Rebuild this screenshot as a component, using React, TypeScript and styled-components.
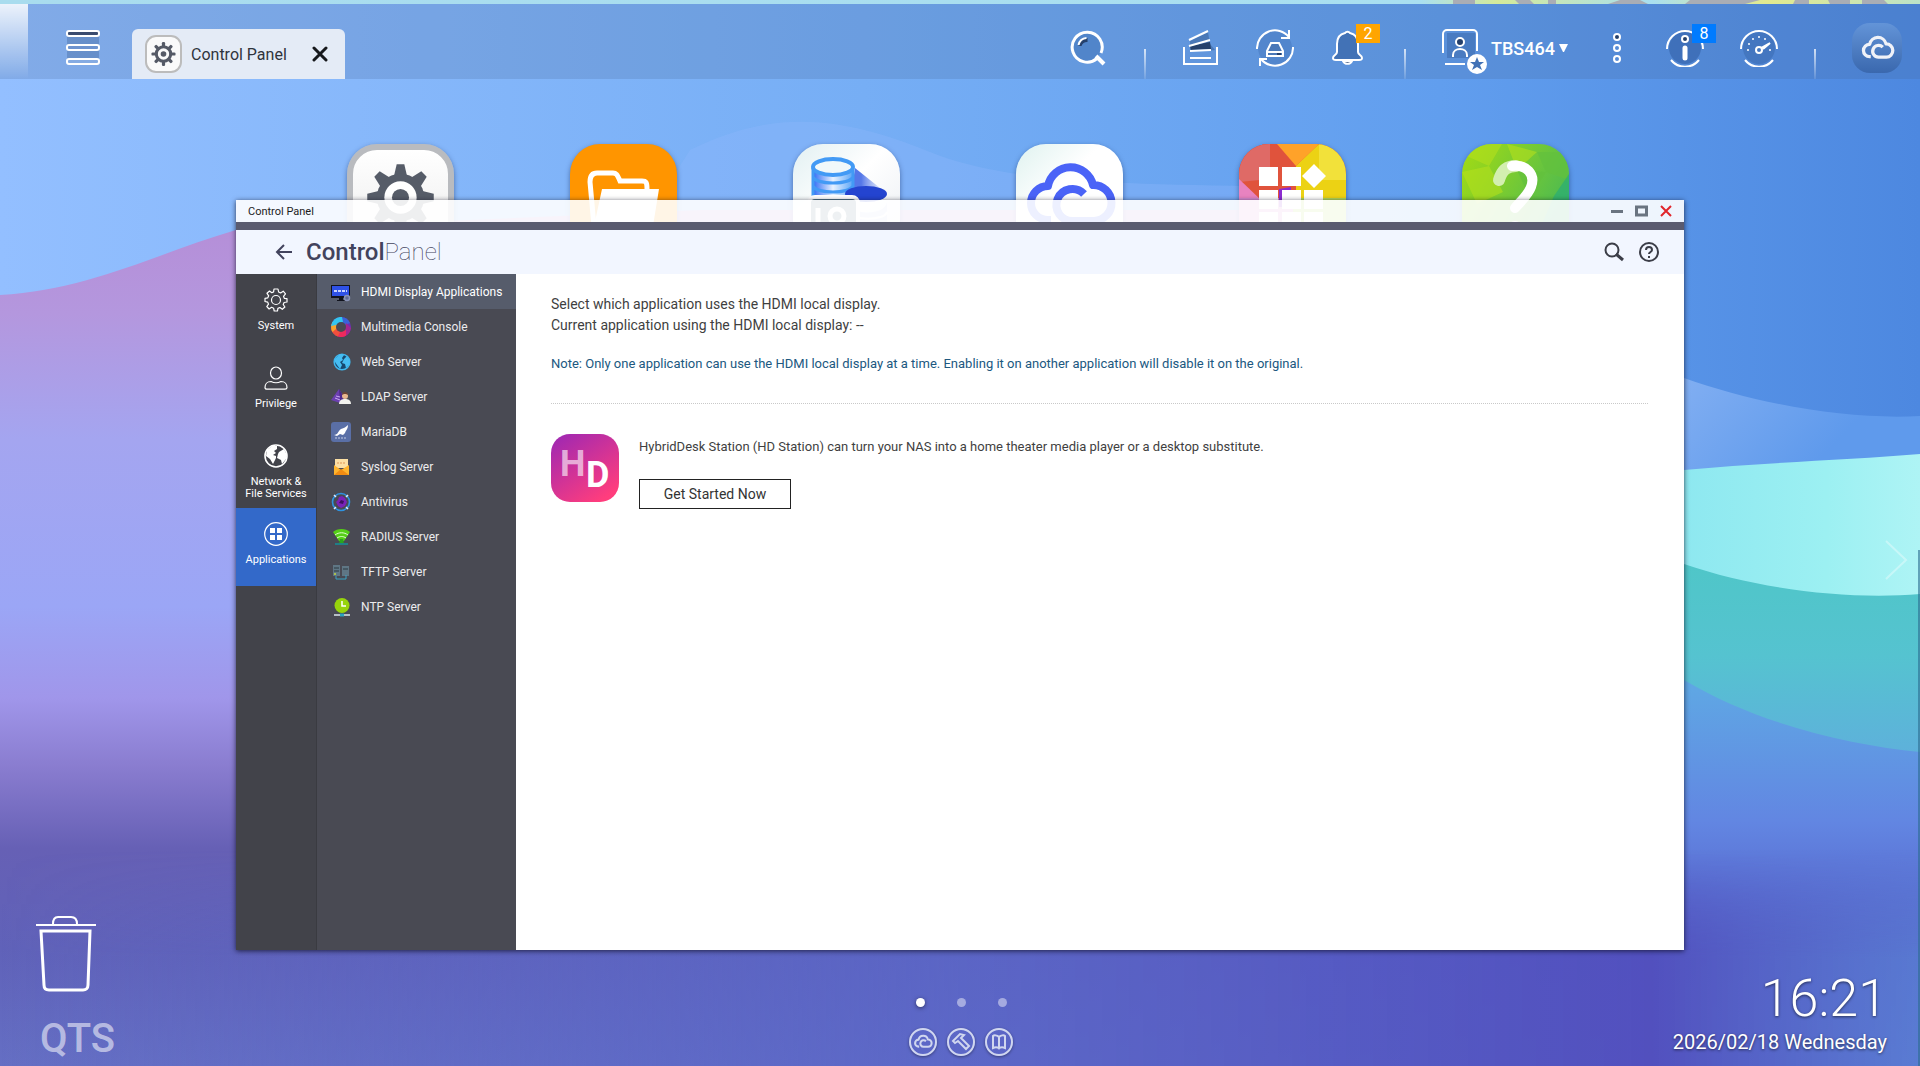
import React from 'react';
import styled, { createGlobalStyle } from 'styled-components';

const GlobalStyle = createGlobalStyle`
  * {
    box-sizing: border-box;
  }
  body {
    margin: 0;
    font-family: Roboto, 'Liberation Sans', sans-serif;
  }
  button {
    font-family: inherit;
    border: none;
    background: none;
    padding: 0;
    color: inherit;
    cursor: pointer;
  }
  svg {
    display: block;
  }
`;

const Desktop = styled.div`
  position: relative;
  isolation: isolate;
  display: flex;
  flex-direction: column;
  min-height: 100vh;
  padding-top: 4px;
  overflow: hidden;
`;

const WallpaperSvg = styled.svg`
  position: absolute;
  inset: 0;
  z-index: -1;
  width: 100%;
  height: 100%;
`;

const TopBar = styled.header`
  display: flex;
  justify-content: space-between;
  height: 75px;
  background: rgba(70, 100, 150, 0.22);
`;

const BarStart = styled.div`
  display: flex;
  align-items: flex-end;
`;

const ShowDesktop = styled.button`
  width: 28px;
  height: 75px;
  margin-right: 38px;
  background: linear-gradient(rgba(255, 255, 255, 0.85), rgba(255, 255, 255, 0));
`;

const MenuButton = styled.button`
  margin: 0 32px 14px 0;
`;

const TaskTab = styled.div`
  display: flex;
  align-items: center;
  width: 213px;
  height: 50px;
  padding: 0 17px 0 13px;
  border-radius: 6px 6px 0 0;
  background: #e4ebf6;
`;

const TaskName = styled.span`
  flex: 1;
  padding-left: 9px;
  font-size: 16px;
  color: #2f343c;
`;

const BarEnd = styled.div`
  display: flex;
  align-items: center;
  gap: 36px;
  height: 50px;
  margin: 19px 18px 0 0;
`;

const BarButton = styled.button`
  position: relative;
  color: #fff;
`;

const Badge = styled.span<{ $color: string }>`
  position: absolute;
  top: -5px;
  left: 26px;
  width: 24px;
  height: 19px;
  font-size: 16px;
  line-height: 19px;
  text-align: center;
  background: ${(p) => p.$color};
`;

const Divider = styled.div`
  align-self: flex-end;
  width: 2px;
  height: 30px;
  margin-bottom: -6px;
  background: linear-gradient(rgba(255, 255, 255, 0.75), rgba(255, 255, 255, 0.1));
`;

const UserButton = styled.button`
  display: flex;
  align-items: center;
  width: 126px;
  height: 50px;
  font-size: 18px;
  font-weight: 500;
  color: #fff;
`;

const Avatar = styled.span`
  padding-top: 8px;
`;

const UserName = styled.span`
  flex: 1;
  padding-left: 3px;
  text-align: left;
`;

const CloudButton = styled.button`
  display: grid;
  place-items: center;
  width: 50px;
  height: 50px;
  border-radius: 18px;
  color: #f0f2f8;
  background: linear-gradient(#6394d8, #3a68ae);
`;

const Shortcuts = styled.nav`
  display: flex;
  justify-content: center;
  gap: 116px;
  padding: 65px 4px 0 0;
`;

const Shortcut = styled.button<{ $background: string; $frame?: string }>`
  display: grid;
  place-items: center;
  width: 107px;
  height: 107px;
  overflow: hidden;
  border-radius: 30px;
  color: #4a63f7;
  background: ${(p) => p.$background};
  border: ${(p) => (p.$frame ? `6px solid ${p.$frame}` : 'none')};
  box-shadow: 0 2px 5px rgba(20, 40, 90, 0.5);
`;

const Window = styled.section`
  position: absolute;
  top: 200px;
  right: 236px;
  bottom: 116px;
  left: 236px;
  display: flex;
  flex-direction: column;
  box-shadow: 0 1px 5px rgba(10, 10, 30, 0.75);
`;

const TitleBar = styled.div`
  display: flex;
  align-items: center;
  justify-content: space-between;
  height: 22px;
  padding: 0 12px;
  font-size: 11px;
  color: #1c1c1c;
  background: rgba(255, 255, 255, 0.9);
`;

const WindowControls = styled.div`
  display: flex;
  gap: 12px;
`;

const Header = styled.div`
  display: flex;
  align-items: center;
  height: 52px;
  padding: 0 25px 0 39px;
  border-top: 8px solid #5a5b6f;
  background: #f2f6ff;
`;

const Heading = styled.h1`
  flex: 1;
  margin: 0 0 0 13px;
  font-size: 24px;
  line-height: 28px;
  font-weight: 500;
  color: #42435d;
`;

const HeadingThin = styled.span`
  font-weight: 100;
`;

const HeaderActions = styled.div`
  display: flex;
  gap: 15px;
  color: #3b3d47;
`;

const WindowBody = styled.div`
  display: flex;
  flex: 1;
  min-height: 0;
`;

const Sections = styled.nav`
  width: 81px;
  border-right: 1px solid #3a3b41;
  background: #42434a;
`;

const SectionButton = styled.button<{ $active?: boolean }>`
  display: flex;
  flex-direction: column;
  align-items: center;
  gap: 8px;
  width: 80px;
  height: 78px;
  padding-top: 14px;
  font-size: 11px;
  line-height: 12px;
  white-space: pre-line;
  color: #fff;
  background: ${(p) => (p.$active ? '#3369c9' : 'transparent')};
`;

const Apps = styled.nav`
  width: 199px;
  background: #494a53;
`;

const AppButton = styled.button<{ $active?: boolean }>`
  display: flex;
  align-items: center;
  gap: 10px;
  width: 100%;
  height: 35px;
  padding-left: 14px;
  font-size: 12px;
  color: ${(p) => (p.$active ? '#fff' : '#ececee')};
  background: ${(p) => (p.$active ? '#565c6b' : 'transparent')};
`;

const Content = styled.main`
  flex: 1;
  padding: 20px 36px 20px 35px;
  font-size: 13px;
  line-height: 20px;
  color: #3f3f3f;
  background: #fff;
`;

const Intro = styled.p`
  margin: 0 0 18px;
  font-size: 14px;
  line-height: 21px;
`;

const Note = styled.p`
  margin: 0;
  padding-bottom: 29px;
  border-bottom: 1px dotted #c9c9c9;
  color: #20587f;
`;

const Station = styled.div`
  display: flex;
  gap: 20px;
  padding-top: 30px;
`;

const StationText = styled.p`
  margin: 3px 0 22px;
`;

const StartButton = styled.button`
  width: 152px;
  height: 30px;
  border: 1px solid #222;
  font-size: 14px;
  color: #333;
`;

const Footer = styled.footer`
  display: grid;
  grid-template-columns: 1fr auto 1fr;
  align-items: end;
  margin-top: auto;
  color: #fff;
`;

const FooterStart = styled.div`
  display: flex;
  flex-direction: column;
  align-items: flex-start;
  padding: 0 0 4px 35px;
`;

const Brand = styled.div`
  margin: 24px 0 0 5px;
  font-size: 40px;
  line-height: 46px;
  font-weight: 500;
  color: rgba(255, 255, 255, 0.55);
`;

const FooterCenter = styled.div`
  display: flex;
  flex-direction: column;
  align-items: center;
  gap: 21px;
  padding: 0 0 10px 2px;
`;

const Pager = styled.div`
  display: flex;
  gap: 32px;
`;

const PageDot = styled.button<{ $active?: boolean }>`
  width: 9px;
  height: 9px;
  border-radius: 50%;
  background: ${(p) => (p.$active ? '#fff' : 'rgba(255, 255, 255, 0.45)')};
  box-shadow: ${(p) => (p.$active ? '0 1px 4px rgba(0, 0, 0, 0.5)' : 'none')};
`;

const QuickLinks = styled.div`
  display: flex;
  gap: 10px;
`;

const QuickButton = styled.button`
  display: grid;
  place-items: center;
  width: 28px;
  height: 28px;
  border: 2px solid #d0d6ef;
  border-radius: 50%;
  color: #d0d6ef;
  box-shadow: 0 1px 3px rgba(0, 0, 0, 0.4);
`;

const Clock = styled.div`
  display: flex;
  flex-direction: column;
  align-items: flex-end;
  padding: 0 33px 11px 0;
  text-shadow: 0 1px 3px rgba(0, 0, 0, 0.6);
`;

const Time = styled.div`
  font-size: 52px;
  line-height: 60px;
  font-weight: 300;
`;

const DateText = styled.div`
  font-size: 20px;
  line-height: 26px;
`;

const NextPage = styled.button`
  position: absolute;
  top: 540px;
  right: 12px;
  opacity: 0.35;
`;

const Wallpaper = () => (
  <WallpaperSvg viewBox="0 0 1920 1066" preserveAspectRatio="none" aria-hidden="true">
    <defs>
      <linearGradient id="sky">
        <stop offset="0" stopColor="#93bfff" />
        <stop offset="0.45" stopColor="#76aef5" />
        <stop offset="0.75" stopColor="#619eee" />
        <stop offset="1" stopColor="#4d88e0" />
      </linearGradient>
      <linearGradient id="dune" gradientUnits="userSpaceOnUse" x1="0" y1="230" x2="0" y2="1066">
        <stop offset="0" stopColor="#b58fd8" />
        <stop offset="0.1" stopColor="#b497de" />
        <stop offset="0.25" stopColor="#a4a5f0" />
        <stop offset="0.45" stopColor="#9ba6f6" />
        <stop offset="0.56" stopColor="#a096ea" />
        <stop offset="0.64" stopColor="#8a7dd0" />
        <stop offset="0.74" stopColor="#6660b5" />
        <stop offset="0.86" stopColor="#6062b9" />
        <stop offset="1" stopColor="#656fc4" />
      </linearGradient>
      <linearGradient id="ridge" gradientUnits="userSpaceOnUse" x1="1684" y1="370" x2="1800" y2="480">
        <stop offset="0" stopColor="#82aff2" />
        <stop offset="1" stopColor="#5f9aec" />
      </linearGradient>
      <linearGradient id="foam" gradientUnits="userSpaceOnUse" x1="1684" y1="0" x2="1920" y2="0">
        <stop offset="0" stopColor="#8ee8f0" />
        <stop offset="0.6" stopColor="#9cf0f2" />
        <stop offset="1" stopColor="#aef4f5" />
      </linearGradient>
      <linearGradient id="lagoon" gradientUnits="userSpaceOnUse" x1="0" y1="560" x2="0" y2="800">
        <stop offset="0" stopColor="#4fc6c8" />
        <stop offset="0.4" stopColor="#55c3d0" />
        <stop offset="1" stopColor="#62a8e0" />
      </linearGradient>
      <linearGradient id="deep" gradientUnits="userSpaceOnUse" x1="0" y1="690" x2="0" y2="1066">
        <stop offset="0" stopColor="#5fa6e4" />
        <stop offset="0.35" stopColor="#6286e2" />
        <stop offset="0.7" stopColor="#545cc6" />
        <stop offset="1" stopColor="#5a6acd" />
      </linearGradient>
      <linearGradient id="floor">
        <stop offset="0" stopColor="#5a66c8" stopOpacity="0" />
        <stop offset="0.5" stopColor="#5a66c8" stopOpacity="0.8" />
        <stop offset="0.86" stopColor="#5250be" />
        <stop offset="1" stopColor="#5a80d4" stopOpacity="0.8" />
      </linearGradient>
      <linearGradient id="floorFade" x1="0" y1="0" x2="0" y2="1">
        <stop offset="0" stopColor="#000" />
        <stop offset="0.5" stopColor="#fff" />
      </linearGradient>
      <mask id="floorMask">
        <rect y="850" width="1920" height="216" fill="url(#floorFade)" />
      </mask>
      <linearGradient id="strip">
        <stop offset="0" stopColor="#a9dcee" />
        <stop offset="0.74" stopColor="#a9dff0" />
        <stop offset="0.78" stopColor="#d5ea9a" />
        <stop offset="0.86" stopColor="#a9dff0" />
        <stop offset="0.92" stopColor="#e3ea8e" />
        <stop offset="1" stopColor="#bde3c8" />
      </linearGradient>
    </defs>
    <rect width="1920" height="1066" fill="url(#sky)" />
    <path d="M690 150C780 105 850 120 930 152S1120 184 1300 187L1300 230H640z" fill="#8fb8fb" opacity="0.35" />
    <path d="M1684 378C1760 405 1850 420 1920 416V500H1300V320z" fill="url(#ridge)" />
    <path d="M1300 470H1684C1770 462 1850 460 1920 454V640H1300z" fill="url(#foam)" />
    <path d="M1300 540L1684 564C1760 590 1850 600 1920 594V1066H1300z" fill="url(#lagoon)" />
    <path d="M1300 680H1684C1760 725 1850 745 1920 752V1066H1300z" fill="url(#deep)" />
    <path d="M0 295C90 290 160 252 236 230L700 210H1300V1066H0z" fill="url(#dune)" />
    <rect y="850" width="1920" height="216" fill="url(#floor)" mask="url(#floorMask)" />
    <rect width="1920" height="4" fill="url(#strip)" />
    <path
      d="M1453 0h22v4h-22zM1515 0h15l4 4h-15zM1548 0h8v4h-8zM1620 0h20l8 4h-40zM1690 0h70l-15 4h-60zM1795 0h14v4h-16zM1828 0h22v4h-20zM1862 0h22l4 4h-26z"
      fill="#a9adb5"
    />
    <path d="M1919 550V1066" stroke="#2d6d91" strokeWidth="2" opacity="0.6" />
  </WallpaperSvg>
);

const angles = [0, 45, 90, 135, 180, 225, 270, 315];

const MainGear = () => (
  <svg width="95" height="95" viewBox="-50 -50 100 100" fill="#565c68">
    {angles.map((angle) => (
      <path key={angle} d="M-7 -22L-4 -35H4L7 -22z" transform={`rotate(${angle})`} />
    ))}
    <circle r="25" />
    <circle r="17" fill="#fff" />
    <circle r="9" />
  </svg>
);

const Cloud = ({ size, width }: { size: number; width: number }) => (
  <svg
    width={size}
    height={size}
    viewBox="0 0 107 107"
    fill="none"
    stroke="currentColor"
    strokeWidth={width}
    strokeLinejoin="round"
  >
    <path d="M35 76H32A17 17 0 0 1 32 42A23 23 0 0 1 77 41A18 18 0 0 1 78 77H57A16 16 0 1 1 68 50" />
  </svg>
);

const MenuIcon = () => (
  <svg width="34" height="35" viewBox="0 0 34 35" fill="none" stroke="#fff" strokeWidth="2">
    <path d="M1 4h32v28H1z" fill="#4f76ae" opacity="0.5" stroke="none" />
    <rect x="1" y="1" width="32" height="5" rx="2" fill="#3a4b6e" />
    <rect x="1" y="15" width="32" height="5" rx="2" fill="#6d93cf" />
    <rect x="1" y="29" width="32" height="5" rx="2" fill="#85abe2" />
  </svg>
);

const TaskIcon = () => (
  <svg width="37" height="38" viewBox="0 0 37 38">
    <rect x="1" y="1" width="35" height="36" rx="10" fill="#fafafa" stroke="#bcbcbc" strokeWidth="2" />
    <g transform="translate(18.5 19)" fill="#555a66">
      {angles.map((angle) => (
        <rect key={angle} x="-1.6" y="-12" width="3.2" height="6" rx="1.2" transform={`rotate(${angle})`} />
      ))}
      <circle r="7.2" fill="none" stroke="#555a66" strokeWidth="3" />
      <circle r="2.8" />
    </g>
  </svg>
);

const SearchIcon = () => (
  <svg width="38" height="38" viewBox="0 0 38 38" fill="none" stroke="#fff">
    <circle cx="17" cy="18" r="14.5" fill="#4578bd" fillOpacity="0.6" stroke="none" />
    <path d="M27 29.5A15 15 0 1 1 31 24" strokeWidth="3" />
    <path d="M26 27l8 8" strokeWidth="4" />
    <path d="M8.5 17a9 9 0 0 1 9-8v4a6 6 0 0 0-6 4z" fill="#25406b" stroke="none" />
    <path d="M8.5 16a9 9 0 0 1 8-7" strokeWidth="2" />
  </svg>
);

const TasksIcon = () => (
  <svg width="38" height="38" viewBox="0 0 38 38" fill="none" stroke="#fff" strokeWidth="2">
    <path d="M8 12L26 3l2 12 5 6-8 1H8z" fill="#3a649e" stroke="none" opacity="0.6" />
    <path d="M8 17l20-4 1 7-20 1z" fill="#25406b" stroke="none" />
    <path d="M7 11l19-9M7 17l21-6M8 22l21-1M8 29h21" />
    <path d="M2 18v17h33V18" />
  </svg>
);

const SyncIcon = () => (
  <svg width="38" height="38" viewBox="0 0 38 38" fill="none" stroke="#fff" strokeWidth="2">
    <circle cx="19" cy="19" r="17" fill="#4578bd" opacity="0.5" stroke="none" />
    <path d="M1 20A18 18 0 0 1 33 8M33 1v8h-8M37 18A18 18 0 0 1 5 30M4 37v-7h7" />
    <path d="M15 14h8l4 8v5H11v-5z" fill="#4a78b8" />
    <path d="M11 23h16" />
    <path d="M21 25h4" stroke="#25406b" />
  </svg>
);

const BellIcon = () => (
  <svg width="38" height="38" viewBox="0 0 38 38" fill="none" stroke="#fff" strokeWidth="2">
    <path
      d="M15 4a3 3 0 0 1 5 0c5 1 8 5 8 11v8c0 3 4 3 4 6 0 2-1 2-3 2H6c-2 0-3 0-3-2 0-3 4-3 4-6v-8c0-6 3-10 8-11z"
      fill="#4272b6"
    />
    <path d="M13 32a5 5 0 0 0 9 0z" fill="#25406b" />
  </svg>
);

const UserIcon = () => (
  <svg width="46" height="46" viewBox="0 0 46 46" fill="none" stroke="#fff" strokeWidth="2">
    <path d="M5 4h28v25H5z" fill="#4272b6" opacity="0.7" stroke="none" />
    <path d="M1 24V5a4 4 0 0 1 4-4h26a4 4 0 0 1 4 4v17M3 35h20" />
    <circle cx="18" cy="13" r="4" fill="#25406b" />
    <path d="M11 28v-2c0-8 14-8 14 0v2" />
    <circle cx="35" cy="35" r="10" fill="#fff" stroke="none" />
    <path d="M35 28l2 5h5l-4 3 2 5-5-3-5 3 2-5-4-3h5z" fill="#4272b6" stroke="none" />
  </svg>
);

const DotsIcon = () => (
  <svg width="26" height="38" viewBox="0 0 26 38" fill="none" stroke="#fff" strokeWidth="2">
    <circle cx="13" cy="8" r="3" fill="#25406b" />
    <circle cx="13" cy="19" r="3" />
    <circle cx="13" cy="30" r="3" />
  </svg>
);

const InfoIcon = () => (
  <svg width="38" height="38" viewBox="0 0 38 38" fill="none" stroke="#fff" strokeWidth="2">
    <circle cx="19" cy="19" r="16" fill="#3867ae" opacity="0.7" stroke="none" />
    <path d="M1 20A18 18 0 0 1 37 20M5 31a18 18 0 0 0 28 0" />
    <circle cx="19" cy="10" r="3" fill="#25406b" />
    <path d="M19 19v10" strokeWidth="5" strokeLinecap="round" />
  </svg>
);

const GaugeIcon = () => (
  <svg width="38" height="38" viewBox="0 0 38 38" fill="none" stroke="#fff" strokeWidth="2">
    <circle cx="19" cy="19" r="16" fill="#3867ae" opacity="0.5" stroke="none" />
    <path d="M1 20A18 18 0 0 1 37 20M5 31a18 18 0 0 0 28 0" />
    <circle cx="19" cy="21" r="3" />
    <path d="M21 19l9-5-7 6" fill="#fff" />
    <g fill="#fff" stroke="none">
      <circle cx="8" cy="21" r="1" />
      <circle cx="9" cy="15" r="1" />
      <circle cx="13" cy="10" r="1" />
      <circle cx="19" cy="8" r="1" />
      <circle cx="25" cy="10" r="1" />
      <circle cx="30" cy="21" r="1" />
    </g>
  </svg>
);

const FolderIcon = () => (
  <svg width="107" height="107" viewBox="0 0 107 107" fill="none">
    <path
      d="M24 82L20 38C20 31 23 29 27 29H43C46 29 47 30 50 37H72C76 37 77 38 77 45"
      stroke="#fff"
      strokeWidth="5"
    />
    <path d="M32 45H89L83 82H24z" fill="#fff" />
  </svg>
);

const StorageIcon = () => (
  <svg width="107" height="107" viewBox="0 0 107 107" fill="none">
    <defs>
      <linearGradient id="beam">
        <stop offset="0.3" stopColor="#5577e8" />
        <stop offset="1" stopColor="#dfe8fb" stopOpacity="0.5" />
      </linearGradient>
      <linearGradient id="drum">
        <stop offset="0" stopColor="#2f6cf5" />
        <stop offset="0.5" stopColor="#e8f2ff" />
        <stop offset="1" stopColor="#5aa5f8" />
      </linearGradient>
    </defs>
    <path d="M62 24L92 48 58 52z" fill="url(#beam)" />
    <path d="M20 24v28h40V24z" fill="url(#drum)" />
    <path d="M20 24v28M60 24v28M20 33c4 8 36 8 40 0M20 42c4 8 36 8 40 0" stroke="#429af5" strokeWidth="3" />
    <ellipse cx="40" cy="23" rx="20" ry="8" fill="#f0f8fa" stroke="#429af5" strokeWidth="4" />
    <ellipse cx="73" cy="50" rx="21" ry="8" fill="#2444d0" />
    <path d="M52 58c5 14 40 14 42 0v35H52z" fill="#c9d6f6" />
    <path d="M54 68c5 9 38 9 40 0" stroke="#fff" strokeWidth="2" />
    <rect x="16" y="53" width="49" height="45" rx="6" fill="#4f7284" stroke="#fff" strokeWidth="4" />
    <path d="M25 64v14" stroke="#fff" strokeWidth="5" />
    <circle cx="44" cy="72" r="7" stroke="#fff" strokeWidth="5" />
  </svg>
);

const AppCenterIcon = () => (
  <svg width="107" height="107" viewBox="0 0 107 107">
    <path d="M0 0h54v54H0z" fill="#e0533c" />
    <path d="M0 0h31v35L0 38z" fill="#df6a66" />
    <path d="M0 35l22 21H0z" fill="#e883c0" />
    <path d="M38 0h42L57 22z" fill="#ffa229" />
    <path d="M80 0L57 22v32h50V36H81z" fill="#ecd214" />
    <path d="M80 0h27v36H80z" fill="#f2e13a" />
    <path d="M0 54h107v53H0z" fill="#b4d959" />
    <path d="M0 54h54v53H0z" fill="#d98bd0" />
    <path d="M40 45l12-2v20H40z" fill="#8b2bd0" />
    <path
      d="M20 23h19v19H20zM43 23h19v19H43zM20 46h19v19H20zM43 46h19v19H43zM65 46h19v19H65zM20 68h19v19H20zM43 68h19v19H43zM65 68h19v19H65zM75 20l12 12-12 12-12-12z"
      fill="#fff"
    />
  </svg>
);

const HelpCenterIcon = () => (
  <svg width="107" height="107" viewBox="0 0 107 107" fill="none">
    <path d="M0 0h40L27 22 0 10zM45 0l30 8-20 18zM0 28l27-6 14 26-26 12z" fill="#b4e01c" opacity="0.6" />
    <path d="M75 8h32v28L84 28zM55 26l29 2-16 26z" fill="#62c13d" opacity="0.7" />
    <path d="M107 30v50H80L92 52z" fill="#2eaf70" opacity="0.8" />
    <path d="M37 36C40 25 46 22 54 22" stroke="#d3efb0" strokeWidth="12" strokeLinecap="round" />
    <path d="M50 22C64 20 74 30 69 43C66 51 60 56 53 64" stroke="#fff" strokeWidth="10" strokeLinecap="round" />
    <circle cx="53" cy="84" r="7" fill="#fff" />
  </svg>
);

const CloseIcon = () => (
  <svg width="16" height="16" viewBox="0 0 16 16" stroke="#16181c" strokeWidth="3" strokeLinecap="round">
    <path d="M2 2l12 12M14 2L2 14" />
  </svg>
);

const BackIcon = () => (
  <svg width="18" height="18" viewBox="0 0 18 18" fill="none" stroke="#42435d" strokeWidth="2">
    <path d="M17 9H2M9 2L2 9l7 7" />
  </svg>
);

const FindIcon = () => (
  <svg width="20" height="20" viewBox="0 0 20 20" fill="none" stroke="currentColor" strokeWidth="2">
    <circle cx="8" cy="8" r="6.5" />
    <path d="M12 12l7 6" strokeWidth="3" />
  </svg>
);

const HelpIcon = () => (
  <svg width="20" height="20" viewBox="0 0 20 20" fill="none" stroke="currentColor" strokeWidth="2">
    <circle cx="10" cy="10" r="9" />
    <path d="M7 8c0-4 6-4 6 0 0 2-3 2-3 4M10 14v2" />
  </svg>
);

const line = { fill: 'none', stroke: '#fff', strokeWidth: 1.2 };

const SystemIcon = () => (
  <svg width="24" height="24" viewBox="0 0 24 24" {...line} strokeLinejoin="round">
    <path d="M10 1h4l.6 3 2 .9L19.2 3.200 21.5 5.800 19.5 8.300l.8 2 2.7.4v3.300l-2.9.5-.9 2 1.700 2.500-2.600 2.300-2.400-1.800-2 .9L13.500 23h-3.300l-.6-2.800-2-.9-2.500 1.700L2.800 18.500l1.700-2.400-.8-2L1 13.500v-3.200l2.800-.5.9-2L3 5.300 5.500 3l2.300 1.700 1.800-.8z" />
    <circle cx="12" cy="12" r="4.5" />
  </svg>
);

const PrivilegeIcon = () => (
  <svg width="24" height="24" viewBox="0 0 24 24" {...line}>
    <ellipse cx="12" cy="7" rx="5.5" ry="6" />
    <path d="M7 15.500c3 1.500 7 1.500 10 0 4 0 6 3 6 6 0 1.200-.5 1.700-2 1.700H3c-1.500 0-2-.5-2-1.700 0-3 2-6 6-6z" />
  </svg>
);

const NetworkIcon = () => (
  <svg width="24" height="24" viewBox="0 0 24 24">
    <circle cx="12" cy="12" r="11" fill="none" stroke="#fff" strokeWidth="1.6" />
    <path
      d="M3 6l5-4 5 0 0 3-3 2 2 2-3 2 3 1 0 2-3 6-3-5-4-3zM15 8l5-3 3 6-1 4-4 5-1-4-4-2 1-4z"
      fill="#fff"
    />
  </svg>
);

const ApplicationsIcon = () => (
  <svg width="24" height="24" viewBox="0 0 24 24">
    <circle cx="12" cy="12" r="11.3" {...line} />
    <path d="M6 6h5v5H6zM13 6h5v5h-5zM6 13h5v5H6zM13 13h5v5h-5z" fill="#fff" />
  </svg>
);

const HdmiIcon = () => (
  <svg width="20" height="20" viewBox="0 0 20 20">
    <path d="M0 3h19v13H0z" fill="#11131d" />
    <path d="M1 4h17v10H1z" fill="#2e51e6" />
    <path d="M3 9h13" stroke="#c9d4ff" strokeWidth="2" strokeDasharray="3 1" />
    <path d="M8 16h4v2h2v1H6v-1h2z" fill="#11131d" />
    <circle cx="16" cy="16" r="2.5" fill="#5f6b96" stroke="#8993b5" strokeWidth="1.5" />
  </svg>
);

const MultimediaIcon = () => (
  <svg width="20" height="20" viewBox="0 0 20 20">
    <circle cx="10" cy="10" r="10" fill="#6b32b5" />
    <path d="M10 0A10 10 0 0 1 19 6L14 8 5 6z" fill="#3b62d8" />
    <path d="M20 11A10 10 0 0 1 10 20L13 14 15 6z" fill="#a3268f" />
    <path d="M15 18.600A10 10 0 0 1 4 18L7 14 15 13z" fill="#ee2a5c" />
    <path d="M7 19.500A10 10 0 0 1 0 11L5 8 9 15z" fill="#f0503c" />
    <path d="M1.500 15A10 10 0 0 1 1.500 5L7 5 5 12z" fill="#f7a42c" />
    <path d="M0 9A10 10 0 0 1 11 0L12 5 5 8z" fill="#33c5f0" />
    <circle cx="10" cy="10" r="5" fill="#494a53" />
  </svg>
);

const WebIcon = () => (
  <svg width="20" height="20" viewBox="0 0 20 20">
    <circle cx="11" cy="10" r="7.8" fill="#17486f" stroke="#3fb7ee" strokeWidth="1.6" />
    <path d="M4 7l5-5 4 1-2 3 1 2-3 2 2 3-2 4-3-4-2-3zM13 7l3-3 3 5-1 4-3 3-1-4-3-1z" fill="#46bdf2" />
  </svg>
);

const LdapIcon = () => (
  <svg width="20" height="20" viewBox="0 0 20 20">
    <path d="M8 2l6 10-5 4-9-3z" fill="#6b3fb0" />
    <path d="M8 2l6 10-5 4z" fill="#4d2a8c" />
    <path d="M5 9l4 1M4 11l5 2" stroke="#c9a8f2" />
    <circle cx="14" cy="9" r="3" fill="#e8b88e" />
    <path d="M11 8c0-4 6-4 6 0l-2-1h-2z" fill="#6f4636" />
    <path d="M8 17c0-4 3-5 6-5s6 1 6 5z" fill="#f2f2ee" />
  </svg>
);

const MariaIcon = () => (
  <svg width="20" height="20" viewBox="0 0 20 20">
    <rect width="20" height="20" rx="3" fill="#5a6fa6" />
    <path d="M3 13c4 0 4-4 7-6 3-1 5-2 7-4 0 4-2 5-3 8l-2 2-3-1-3 2z" fill="#fff" />
    <path d="M4 16h12" stroke="#c2cce5" strokeDasharray="2 1" />
  </svg>
);

const SyslogIcon = () => (
  <svg width="20" height="20" viewBox="0 0 20 20">
    <path d="M4 2h13v9H4z" fill="#fde0a4" />
    <path d="M6 6h9" stroke="#efbb7c" strokeWidth="2" strokeDasharray="2 1" />
    <path d="M3 8l7 5 8-5v10H3z" fill="#ffb52e" />
    <path d="M3 18l7-6 8 6z" fill="#f28c12" />
  </svg>
);

const AntivirusIcon = () => (
  <svg width="20" height="20" viewBox="0 0 20 20" fill="none">
    <circle cx="10" cy="10" r="8.5" stroke="#2f93e0" strokeWidth="1.6" />
    <path d="M3 3l2 2M17 3l-2 2M3 17l2-2M17 17l-2-2" stroke="#dcecff" strokeWidth="1.5" />
    <path d="M8 5l3-1 3 2 2 4-2 4-4 2-3-2-2-4 2-2z" fill="#7a22b8" />
    <path d="M10 8l3 1-1 3-4-1z" fill="#3c1062" />
  </svg>
);

const RadiusIcon = () => (
  <svg width="20" height="20" viewBox="0 0 20 20" fill="none">
    <path d="M2 5c4-4 13-4 17 0l-6 9h-5z" fill="#55cf17" />
    <path d="M4 8c4-3 9-3 13 0M6 11c3-2 6-2 9 0" stroke="#e4ffd6" strokeWidth="1" />
    <path d="M9 12h3l1 5h-5z" fill="#2ba51c" />
    <path d="M4 17h13" stroke="#207f86" strokeWidth="2" />
  </svg>
);

const TftpIcon = () => (
  <svg width="20" height="20" viewBox="0 0 20 20" fill="none">
    <path d="M2 3h7v11H2zM11 4h7v10h-7z" fill="#5f7684" />
    <path d="M3 6h5M3 9h5M12 7h5" stroke="#2c3941" />
    <path d="M5 14v3h10v-4" stroke="#3aa3c4" />
    <circle cx="4" cy="12" r="1" fill="#c3d93c" />
  </svg>
);

const NtpIcon = () => (
  <svg width="20" height="20" viewBox="0 0 20 20" fill="none">
    <circle cx="11" cy="8.5" r="7.5" fill="#97d40c" />
    <path d="M11 4v5h4" stroke="#fff" strokeWidth="1.5" />
    <path d="M3 18h16" stroke="#b7bfc6" strokeWidth="2" />
    <path d="M9 18h4" stroke="#2ba3bd" strokeWidth="3" />
  </svg>
);

const HdLogo = () => (
  <svg width="68" height="68" viewBox="0 0 68 68">
    <defs>
      <linearGradient id="hd" x1="0" y1="0" x2="0.7" y2="1">
        <stop offset="0" stopColor="#9a27b5" />
        <stop offset="1" stopColor="#ff3d7d" />
      </linearGradient>
    </defs>
    <rect width="68" height="68" rx="19" fill="url(#hd)" />
    <text x="9" y="42" fontSize="36" fontWeight="700" fill="#fff" fillOpacity="0.6">
      H
    </text>
    <text x="35" y="53" fontSize="36" fontWeight="700" fill="#fff">
      D
    </text>
  </svg>
);

const TrashIcon = () => (
  <svg width="61" height="76" viewBox="0 0 61 76" fill="none" stroke="#fff" strokeWidth="3">
    <path d="M18 8c0-5 2-7 5-7h13c4 0 6 2 6 7" strokeWidth="2" />
    <path d="M1 9h60" strokeWidth="2" />
    <path d="M6 15h49l-2 54c0 3-2 5-5 5H14c-4 0-5-2-5-5z" />
  </svg>
);

const HammerIcon = () => (
  <svg width="20" height="20" viewBox="0 0 20 20" fill="none" stroke="currentColor" strokeWidth="2">
    <path d="M2 9l7-7 4 1-3 3 8 8-3 3-8-8-3 2z" />
  </svg>
);

const BookIcon = () => (
  <svg width="20" height="20" viewBox="0 0 20 20" fill="none" stroke="currentColor" strokeWidth="2">
    <path d="M10 16V5c-2-2-5-2-6-1v12c2-1 4-1 6 0zM10 16V5c2-2 5-2 6-1v12c-2-1-4-1-6 0z" />
  </svg>
);

const shortcuts = [
  { name: 'Control Panel', background: 'linear-gradient(#fff, #ececec)', frame: '#b9bbbf', icon: <MainGear /> },
  { name: 'File Station', background: '#ff9500', icon: <FolderIcon /> },
  {
    name: 'Storage & Snapshots',
    background: 'linear-gradient(135deg, #e2f0f2, #fff 45%, #e9edf2)',
    icon: <StorageIcon />,
  },
  {
    name: 'myQNAPcloud',
    background: 'linear-gradient(135deg, #dff2ef, #fff 40%, #fff)',
    icon: <Cloud size={107} width={8} />,
  },
  { name: 'App Center', background: '#e0533c', icon: <AppCenterIcon /> },
  { name: 'Help Center', background: 'linear-gradient(120deg, #a5dc12, #38b260)', icon: <HelpCenterIcon /> },
];

const sections = [
  { name: 'System', icon: <SystemIcon /> },
  { name: 'Privilege', icon: <PrivilegeIcon /> },
  { name: 'Network &\nFile Services', icon: <NetworkIcon /> },
  { name: 'Applications', icon: <ApplicationsIcon /> },
];

const apps = [
  { name: 'HDMI Display Applications', icon: <HdmiIcon /> },
  { name: 'Multimedia Console', icon: <MultimediaIcon /> },
  { name: 'Web Server', icon: <WebIcon /> },
  { name: 'LDAP Server', icon: <LdapIcon /> },
  { name: 'MariaDB', icon: <MariaIcon /> },
  { name: 'Syslog Server', icon: <SyslogIcon /> },
  { name: 'Antivirus', icon: <AntivirusIcon /> },
  { name: 'RADIUS Server', icon: <RadiusIcon /> },
  { name: 'TFTP Server', icon: <TftpIcon /> },
  { name: 'NTP Server', icon: <NtpIcon /> },
];

const ControlPanel = () => {
  const [section, setSection] = React.useState('Applications');
  const [app, setApp] = React.useState('HDMI Display Applications');

  return (
    <Window aria-label="Control Panel">
      <TitleBar>
        <span>Control Panel</span>
        <WindowControls>
          <button aria-label="Minimize">
            <svg width="12" height="12" viewBox="0 0 12 12">
              <path d="M0 5h12v3H0z" fill="#6a7480" />
            </svg>
          </button>
          <button aria-label="Maximize">
            <svg width="13" height="12" viewBox="0 0 13 12">
              <path d="M1.500 2h10v8h-10z" fill="none" stroke="#6a7480" strokeWidth="3" />
            </svg>
          </button>
          <button aria-label="Close">
            <svg width="12" height="12" viewBox="0 0 12 12">
              <path d="M1 1l10 10M11 1L1 11" stroke="#e0252b" strokeWidth="2" />
            </svg>
          </button>
        </WindowControls>
      </TitleBar>
      <Header>
        <button aria-label="Back">
          <BackIcon />
        </button>
        <Heading>
          Control<HeadingThin>Panel</HeadingThin>
        </Heading>
        <HeaderActions>
          <button aria-label="Search">
            <FindIcon />
          </button>
          <button aria-label="Help">
            <HelpIcon />
          </button>
        </HeaderActions>
      </Header>
      <WindowBody>
        <Sections>
          {sections.map(({ name, icon }) => (
            <SectionButton key={name} $active={name === section} onClick={() => setSection(name)}>
              {icon}
              {name}
            </SectionButton>
          ))}
        </Sections>
        <Apps>
          {apps.map(({ name, icon }) => (
            <AppButton key={name} $active={name === app} onClick={() => setApp(name)}>
              {icon}
              {name}
            </AppButton>
          ))}
        </Apps>
        <Content>
          <Intro>
            Select which application uses the HDMI local display.
            <br />
            Current application using the HDMI local display: --
          </Intro>
          <Note>
            Note: Only one application can use the HDMI local display at a time. Enabling it on
            another application will disable it on the original.
          </Note>
          <Station>
            <HdLogo />
            <div>
              <StationText>
                HybridDesk Station (HD Station) can turn your NAS into a home theater media player or
                a desktop substitute.
              </StationText>
              <StartButton>Get Started Now</StartButton>
            </div>
          </Station>
        </Content>
      </WindowBody>
    </Window>
  );
};

const App = () => (
  <Desktop>
    <GlobalStyle />
    <Wallpaper />
    <TopBar>
      <BarStart>
        <ShowDesktop aria-label="Show desktop" />
        <MenuButton aria-label="Main menu">
          <MenuIcon />
        </MenuButton>
        <TaskTab>
          <TaskIcon />
          <TaskName>Control Panel</TaskName>
          <button aria-label="Close Control Panel">
            <CloseIcon />
          </button>
        </TaskTab>
      </BarStart>
      <BarEnd>
        <BarButton aria-label="Search">
          <SearchIcon />
        </BarButton>
        <Divider />
        <BarButton aria-label="Background tasks">
          <TasksIcon />
        </BarButton>
        <BarButton aria-label="External devices">
          <SyncIcon />
        </BarButton>
        <BarButton aria-label="Notifications">
          <BellIcon />
          <Badge $color="#ffa500">2</Badge>
        </BarButton>
        <Divider />
        <UserButton>
          <Avatar>
            <UserIcon />
          </Avatar>
          <UserName>TBS464</UserName>
          <svg width="9" height="8" viewBox="0 0 9 8">
            <path d="M0 0h9L5 8H4z" fill="#fff" />
          </svg>
        </UserButton>
        <BarButton aria-label="More">
          <DotsIcon />
        </BarButton>
        <BarButton aria-label="Information">
          <InfoIcon />
          <Badge $color="#007bff">8</Badge>
        </BarButton>
        <BarButton aria-label="Dashboard">
          <GaugeIcon />
        </BarButton>
        <Divider />
        <CloudButton aria-label="Cloud">
          <Cloud size={39} width={9} />
        </CloudButton>
      </BarEnd>
    </TopBar>
    <Shortcuts>
      {shortcuts.map(({ name, background, frame, icon }) => (
        <Shortcut key={name} aria-label={name} $background={background} $frame={frame}>
          {icon}
        </Shortcut>
      ))}
    </Shortcuts>
    <ControlPanel />
    <NextPage aria-label="Next page">
      <svg width="24" height="40" viewBox="0 0 24 40" fill="none" stroke="#fff" strokeWidth="2">
        <path d="M2 1l20 19L2 39" />
      </svg>
    </NextPage>
    <Footer>
      <FooterStart>
        <button aria-label="Recycle bin">
          <TrashIcon />
        </button>
        <Brand>QTS</Brand>
      </FooterStart>
      <FooterCenter>
        <Pager>
          <PageDot $active aria-label="Page 1" />
          <PageDot aria-label="Page 2" />
          <PageDot aria-label="Page 3" />
        </Pager>
        <QuickLinks>
          <QuickButton aria-label="Cloud">
            <Cloud size={22} width={10} />
          </QuickButton>
          <QuickButton aria-label="Utilities">
            <HammerIcon />
          </QuickButton>
          <QuickButton aria-label="Guides">
            <BookIcon />
          </QuickButton>
        </QuickLinks>
      </FooterCenter>
      <Clock>
        <Time>16:21</Time>
        <DateText>2026/02/18 Wednesday</DateText>
      </Clock>
    </Footer>
  </Desktop>
);

export default App;
